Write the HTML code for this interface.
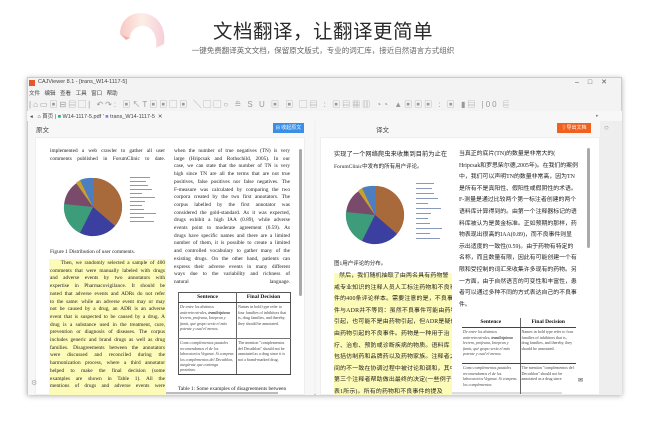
<!DOCTYPE html>
<html><head><meta charset="utf-8"><style>
*{margin:0;padding:0;box-sizing:border-box}
body{width:646px;height:433px;background:#fff;position:relative;overflow:hidden;font-family:"Liberation Sans","Noto Sans CJK SC",sans-serif}
.a{position:absolute}
.t{font-family:"Liberation Serif",serif;font-size:5.3px;line-height:7.7px;color:#222;text-align:justify;text-align-last:justify;white-space:nowrap;overflow:hidden}
.c{font-family:"Liberation Serif","Noto Sans CJK SC",serif;font-size:6.3px;line-height:11.6px;color:#222;white-space:nowrap;overflow:hidden}
.tb{font-size:6px;color:#444;white-space:nowrap}
table{border-collapse:collapse;font-family:"Liberation Serif",serif;font-size:4px;line-height:5.4px;color:#444;table-layout:fixed}
td,th{border-left:1px solid #666;padding:1px;vertical-align:top;font-style:italic;overflow:hidden}
th{font-style:normal;font-size:5.5px;color:#111;border-bottom:1px solid #444;padding:2px}
</style></head><body>

<svg class="a" style="left:112px;top:4px" width="60" height="48" viewBox="0 0 60 48">
<defs><linearGradient id="g" x1="0" x2="1"><stop offset="0" stop-color="#f8c9c4"/><stop offset="0.5" stop-color="#fbeee6"/><stop offset="1" stop-color="#f6cfd8"/></linearGradient></defs>
<path d="M8 30 C8 14 22 6 36 10 C48 14 54 26 52 40 L44 44 C46 30 38 20 28 22 C22 24 18 28 18 34 Z" fill="url(#g)"/>
<path d="M8 30 L18 34 L14 36 Z" fill="#f4b0a5"/>
</svg>

<div class="a" style="left:0;width:646px;top:15px;text-align:center;font-size:19.5px;color:#2a2a2a;letter-spacing:0.5px">文档翻译，让翻译更简单</div>
<div class="a" style="left:0;width:646px;top:45px;text-align:center;font-size:7.5px;color:#666">一键免费翻译英文文档，保留原文版式，专业的词汇库，接近自然语言方式组织</div>

<!-- window -->
<div class="a" style="left:27px;top:77px;width:595px;height:318px;background:#f3f3f3;box-shadow:0 1px 5px rgba(0,0,0,.3);border:1px solid #ccc"></div>
<div class="a" style="left:29px;top:80px;width:6px;height:6px;background:#e8572a"></div>
<div class="a tb" style="left:38px;top:79px;font-size:5.5px">CAJViewer 8.1 - [trans_W14-1117-5]</div>
<div class="a tb" style="left:575px;top:78px;font-size:7px;color:#555;letter-spacing:9px">–□✕</div>
<div class="a tb" style="left:29px;top:89px;font-size:5.5px;word-spacing:3px">文件 编辑 查看 工具 窗口 帮助</div>
<div class="a tb" style="left:29px;top:99px;font-size:8px;color:#999;letter-spacing:2px;overflow:hidden;width:480px">|⌂▭▣⊟▤▢| ↶↷: ▣↖T▣▣▢▣ ╲▢▢○ ≞ S U ▣ ▣ ▢▤ : ▣▤▦▥ ◔◔ ▲▣▣▣ : ▣ ▮▤ |00 ▤ :</div>
<div class="a" style="left:27px;top:111px;width:595px;height:10px;background:#f7f7f7"></div>
<div class="a tb" style="left:30px;top:112px;font-size:5.5px">◂ &nbsp;&nbsp;⌂ 首页 | <span style="color:#1bb17a">■</span> W14-1117-5.pdf ' <span style="color:#8a7be8">■</span> trans_W14-1117-5 &nbsp;✕</div>
<div class="a" style="left:600px;top:121px;width:22px;height:274px;background:#eeeeee"></div>
<div class="a" style="left:604px;top:123px;font-size:8px;color:#888">○</div>
<div class="a" style="left:596px;top:113px;font-size:5px;color:#888">▸</div>

<div class="a" style="left:28px;top:121px;width:286px;height:274px;background:#f7f7f7"></div>
<div class="a" style="left:316px;top:121px;width:284px;height:274px;background:#f7f7f7"></div>
<div class="a" style="left:36px;top:124px;font-size:6.5px;color:#444">原文</div>
<div class="a" style="left:273px;top:123px;width:31px;height:10px;background:#3a8ee6;color:#fff;font-size:5px;line-height:10px;text-align:center">⊟ 收起原文</div>
<div class="a" style="left:376px;top:124px;font-size:6.5px;color:#444">译文</div>
<div class="a" style="left:557px;top:123px;width:34px;height:10px;background:#f2601f;color:#fff;font-size:5px;line-height:10px;text-align:center">⇧导出文档</div>

<!-- left page -->
<div class="a" style="left:35px;top:137px;width:270px;height:258px;background:#fff;border:1px solid #eee"></div>
<div class="a" style="left:299px;top:149px;width:3px;height:147px;background:#aaa;border-radius:2px"></div>
<div class="a" style="left:56px;top:392px;width:222px;height:2px;background:#bbb"></div>
<div class="a" style="left:31px;top:379px;font-size:7px;color:#aaa">⚙</div>

<div class="a t" style="left:50px;top:148px;width:115px">implemented a web crawler to gather all user<br><span style="text-align-last:left">comments published in ForumClinic to date.</span></div>
<svg class="a" style="left:60px;top:172px" width="105" height="70" viewBox="0 0 105 70">
<circle cx="33" cy="35" r="29" fill="#7a4a6a"/>
<path d="M33 35 L33 6 A29 29 0 0 1 55 54 Z" fill="#a86a3a"/>
<path d="M33 35 L55 54 A29 29 0 0 1 20 61 Z" fill="#3b3fa0"/>
<path d="M33 35 L20 61 A29 29 0 0 1 4 32 Z" fill="#3d9c7a"/>
<path d="M33 35 L20 8 A29 29 0 0 1 33 6 Z" fill="#4d7fc0"/>
<path d="M33 35 L16 11 A29 29 0 0 1 20 8 Z" fill="#c8a030"/>
<g fill="#8899bb"><rect x="70" y="5" width="20" height="1"/><rect x="70" y="9" width="16" height="1"/><rect x="70" y="13" width="18" height="1"/><rect x="70" y="17" width="22" height="1"/><rect x="70" y="21" width="12" height="1"/><rect x="70" y="25" width="25" height="1"/><rect x="70" y="29" width="15" height="1"/><rect x="70" y="33" width="12" height="1"/><rect x="70" y="37" width="14" height="1"/><rect x="70" y="41" width="26" height="1"/><rect x="70" y="45" width="14" height="1"/><rect x="70" y="49" width="24" height="1"/></g>
</svg>
<div class="a t" style="left:50px;top:249px;width:115px;text-align-last:left">Figure 1 Distribution of user comments.</div>
<div class="a" style="left:49px;top:259px;width:117px;height:136px;background:#fdfbb8"></div>
<div class="a t" style="left:50px;top:260px;width:115px;height:135px">&nbsp;&nbsp;&nbsp;&nbsp;Then, we randomly selected a sample of 400<br>comments that were manually labeled with drugs<br>and adverse events by two annotators with<br>expertise in Pharmacovigilance. It should be<br>noted that adverse events and ADRs do not refer<br>to the same: while an adverse event may or may<br>not be caused by a drug, an ADR is an adverse<br>event that is suspected to be caused by a drug. A<br>drug is a substance used in the treatment, cure,<br>prevention or diagnosis of diseases. The corpus<br>includes generic and brand drugs as well as drug<br>families. Disagreements between the annotators<br>were discussed and reconciled during the<br>harmonization process, where a third annotator<br>helped to make the final decision (some<br>examples are shown in Table 1). All the<br>mentions of drugs and adverse events were</div>
<div class="a t" style="left:174px;top:148px;width:116px">when the number of true negatives (TN) is very<br>large (Hripcsak and Rothschild, 2005). In our<br>case, we can state that the number of TN is very<br>high since TN are all the terms that are not true<br>positives, false positives nor false negatives. The<br>F-measure was calculated by comparing the two<br>corpora created by the two first annotators. The<br>corpus labelled by the first annotator was<br>considered the gold-standard. As it was expected,<br>drugs exhibit a high IAA (0.89), while adverse<br>events point to moderate agreement (0.59). As<br>drugs have specific names and there are a limited<br>number of them, it is possible to create a limited<br>and controlled vocabulary to gather many of the<br>existing drugs. On the other hand, patients can<br>express their adverse events in many different<br>ways due to the variability and richness of<br><span style="text-align-last:left">natural language.</span></div>
<table class="a" style="left:178px;top:292px;width:113px;border:1px solid #555">
<tr><th style="width:58px">Sentence</th><th>Final Decision</th></tr>
<tr><td style="border-left:0;border-bottom:1px solid #777;height:36px">De entre los distintos antirretrovirales, <b>tranilcipiona</b> lecrem, profeana, Intepran y famit, qué grupo sería el más potente y cual el menos.</td><td style="border-bottom:1px solid #777;font-style:normal">Names in bold type refer to four families of inhibitors that is, drug families, and thereby, they should be annotated.</td></tr>
<tr><td style="border-left:0;border-bottom:1px solid #444;height:34px">Como complementos pautales recomendamos el de los laboratorios Vegenat. Si compras los complementos del Decathlon, asegúrate que contenga proteínas.</td><td style="border-bottom:1px solid #444;font-style:normal">The mention "complementos del Decathlon" should not be annotated as a drug since it is not a brand-marked drug.</td></tr>
</table>
<div class="a t" style="left:178px;top:386px;width:113px;text-align-last:left">Table 1: Some examples of disagreements between</div>

<!-- right page -->
<div class="a" style="left:320px;top:137px;width:280px;height:258px;background:#fff;border:1px solid #eee"></div>
<div class="a" style="left:587px;top:148px;width:3px;height:100px;background:#aaa;border-radius:2px"></div>
<div class="a" style="left:340px;top:392px;width:222px;height:2px;background:#ddd"></div>
<div class="a" style="left:578px;top:377px;font-size:6px;color:#333">✉</div>
<div class="a c" style="left:334px;top:149px;width:118px;font-size:6.2px;letter-spacing:0.1px">实现了一个网络爬虫来收集到目前为止在<br><span style="font-size:5.5px;letter-spacing:0">ForumClinic中发布的所有用户评论。</span></div>
<svg class="a" style="left:344px;top:180px" width="110" height="70" viewBox="0 0 110 70">
<circle cx="31" cy="35" r="29" fill="#7a4a6a"/>
<path d="M31 35 L31 6 A29 29 0 0 1 53 54 Z" fill="#a86a3a"/>
<path d="M31 35 L53 54 A29 29 0 0 1 18 61 Z" fill="#3b3fa0"/>
<path d="M31 35 L18 61 A29 29 0 0 1 2 32 Z" fill="#3d9c7a"/>
<path d="M31 35 L18 8 A29 29 0 0 1 31 6 Z" fill="#4d7fc0"/>
<path d="M31 35 L14 11 A29 29 0 0 1 18 8 Z" fill="#c8a030"/>
<g fill="#8899bb"><rect x="72" y="3" width="18" height="1"/><rect x="72" y="8" width="16" height="1"/><rect x="72" y="13" width="18" height="1"/><rect x="72" y="18" width="22" height="1"/><rect x="72" y="23" width="12" height="1"/><rect x="72" y="28" width="25" height="1"/><rect x="72" y="33" width="15" height="1"/><rect x="72" y="38" width="12" height="1"/><rect x="72" y="43" width="14" height="1"/><rect x="72" y="48" width="26" height="1"/><rect x="72" y="53" width="14" height="1"/><rect x="72" y="58" width="24" height="1"/></g>
</svg>
<div class="a c" style="left:334px;top:259px;width:118px;font-size:5.5px">图1用户评论的分布。</div>
<div class="a" style="left:334px;top:273px;width:118px;height:122px;background:#fdfbb8"></div>
<div class="a c" style="left:334px;top:271px;width:118px;height:124px;font-size:5.9px;letter-spacing:0.2px">&nbsp;&nbsp;&nbsp;然后，我们随机抽取了由两名具有药物警<br>戒专业知识的注释人员人工标注药物和不良事<br>件的400条评论样本。需要注意的是，不良事<br>件与ADR并不等同：虽然不良事件可能由药物<br>引起，也可能不是由药物引起，但ADR是疑似<br>由药物引起的不良事件。药物是一种用于治<br>疗、治愈、预防或诊断疾病的物质。语料库<br>包括仿制药和品牌药以及药物家族。注释者之<br>间的不一致在协调过程中被讨论和调和，其中<br>第三个注释者帮助做出最终的决定(一些例子如<br>表1所示)。所有的药物和不良事件的提及</div>
<div class="a c" style="left:459px;top:149px;width:122px;font-size:5.9px">当真正的底片(TN)的数量是非常大的(<br>Hripcsak和罗思柴尔德,2005年)。在我们的案例<br>中，我们可以声明TN的数量非常高，因为TN<br>是所有不是真阳性、假阳性或假阴性的术语。<br>F-测量是通过比较两个第一标注者创建的两个<br>语料库计算得到的。由第一个注释器标记的语<br>料库被认为是黄金标准。正如预期的那样，药<br>物表现出很高的IAA(0.89)，而不良事件则显<br>示出适度的一致性(0.59)。由于药物有特定的<br>名称，而且数量有限，因此有可能创建一个有<br>限和受控制的词汇来收集许多现有的药物。另<br>一方面，由于自然语言的可变性和丰富性，患<br>者可以通过多种不同的方式表达自己的不良事<br>件。</div>
<table class="a" style="left:462px;top:318px;width:114px">
<tr><th style="border-left:0;border-bottom:1px solid #444;width:58px">Sentence</th><th style="border-bottom:1px solid #444">Final Decision</th></tr>
<tr><td style="border-left:0;border-bottom:1px solid #444;height:36px">De entre los distintos antirretrovirales, <b>tranilcipiona</b> lecrem, profeana, Intepran y famit, qué grupo sería el más potente y cual el menos.</td><td style="border-bottom:1px solid #444;font-style:normal">Names in bold type refer to four families of inhibitors that is, drug families, and thereby, they should be annotated.</td></tr>
<tr><td style="border-left:0;height:30px">Como complementos pautales recomendamos el de los laboratorios Vegenat. Si compras los complementos</td><td style="font-style:normal">The mention "complementos del Decathlon" should not be annotated as a drug since</td></tr>
</table>
</body></html>
